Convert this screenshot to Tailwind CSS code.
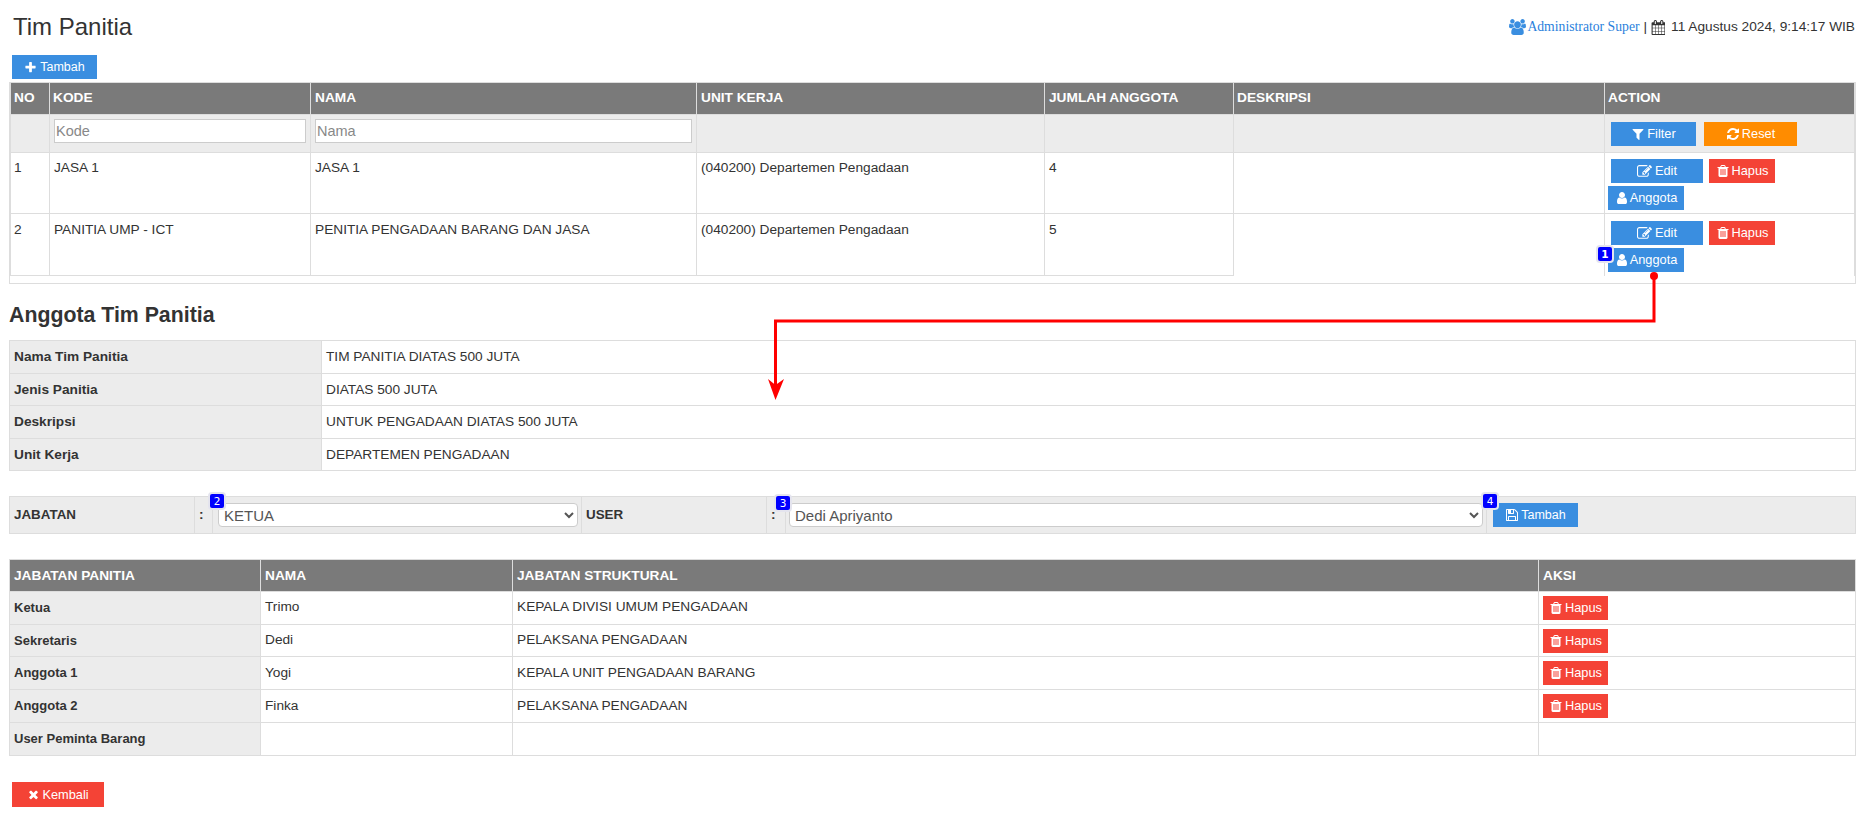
<!DOCTYPE html>
<html lang="en">
  <head>
    <meta charset="UTF-8" />
    <meta name="viewport" content="width=device-width, initial-scale=1.0" />
    <script src="https://cdn.jsdelivr.net/npm/@tailwindcss/browser@4"></script>
    <title>Tim Panitia</title>
  </head>
  <body class="bg-white">
    <svg class="hidden">
      <symbol id="i-plus" viewBox="0 0 1792 1792"><path d="M1600 736v192q0 40-28 68t-68 28h-416v416q0 40-28 68t-68 28h-192q-40 0-68-28t-28-68v-416h-416q-40 0-68-28t-28-68v-192q0-40 28-68t68-28h416v-416q0-40 28-68t68-28h192q40 0 68 28t28 68v416h416q40 0 68 28t28 68z"/></symbol>
      <symbol id="i-user" viewBox="0 0 1792 1792"><path d="M1536 1399q0 109-62.5 187t-150.5 78h-854q-88 0-150.5-78t-62.5-187q0-85 8.5-160.5t31.5-152 58.5-131 94-89 134.5-34.5q131 128 313 128t313-128q76 0 134.5 34.5t94 89 58.5 131 31.5 152 8.5 160.5zm-256-887q0 159-112.5 271.5t-271.5 112.5-271.5-112.5-112.5-271.5 112.5-271.5 271.5-112.5 271.5 112.5 112.5 271.5z"/></symbol>
      <symbol id="i-trash" viewBox="0 0 1792 1792"><path d="M704 1376v-704q0-14-9-23t-23-9h-64q-14 0-23 9t-9 23v704q0 14 9 23t23 9h64q14 0 23-9t9-23zm256 0v-704q0-14-9-23t-23-9h-64q-14 0-23 9t-9 23v704q0 14 9 23t23 9h64q14 0 23-9t9-23zm256 0v-704q0-14-9-23t-23-9h-64q-14 0-23 9t-9 23v704q0 14 9 23t23 9h64q14 0 23-9t9-23zm-544-992h448l-48-117q-7-9-17-11h-317q-10 2-17 11zm928 32v64q0 14-9 23t-23 9h-96v948q0 83-47 143.5t-113 60.5h-832q-66 0-113-58.5t-47-141.5v-952h-96q-14 0-23-9t-9-23v-64q0-14 9-23t23-9h309l70-167q15-37 54-63t79-26h320q40 0 79 26t54 63l70 167h309q14 0 23 9t9 23z"/></symbol>
      <symbol id="i-filter" viewBox="0 0 1792 1792"><path d="M1595 295q17 41-14 70l-493 493v742q0 42-39 59-13 5-25 5-27 0-45-19l-256-256q-19-19-19-45v-486l-493-493q-31-29-14-70 17-39 59-39h1280q42 0 59 39z"/></symbol>
      <symbol id="i-refresh" viewBox="0 0 1792 1792"><path d="M1639 1056q0 5-1 7-64 268-268 434.5t-478 166.5q-146 0-282.5-55t-243.5-157l-129 129q-19 19-45 19t-45-19-19-45v-448q0-26 19-45t45-19h448q26 0 45 19t19 45-19 45l-137 137q71 66 161 102t187 36q134 0 250-65t186-179q11-17 53-117 8-23 30-23h192q13 0 22.5 9.5t9.5 22.5zm25-800v448q0 26-19 45t-45 19h-448q-26 0-45-19t-19-45 19-45l138-138q-148-137-349-137-134 0-250 65t-186 179q-11 17-53 117-8 23-30 23h-199q-13 0-22.5-9.5t-9.5-22.5v-7q65-268 270-434.5t480-166.5q146 0 284 55.5t245 156.5l130-129q19-19 45-19t45 19 19 45z"/></symbol>
      <symbol id="i-edit" viewBox="0 0 1792 1792"><path d="M888 1184l116-116-152-152-116 116v56h96v96h56zm440-720q-16-16-33 1l-350 350q-17 17-1 33t33-1l350-350q17-17 1-33zm80 594v190q0 119-84.5 203.5t-203.5 84.5h-832q-119 0-203.5-84.5t-84.5-203.5v-832q0-119 84.5-203.5t203.5-84.5h832q63 0 117 25 15 7 18 23 3 17-9 29l-49 49q-14 14-32 8-23-6-45-6h-832q-66 0-113 47t-47 113v832q0 66 47 113t113 47h832q66 0 113-47t47-113v-126q0-13 9-22l64-64q15-15 35-7t20 29zm-96-738l288 288-672 672h-288v-288zm444 132l-92 92-288-288 92-92q28-28 68-28t68 28l152 152q28 28 28 68t-28 68z"/></symbol>
      <symbol id="i-save" viewBox="0 0 1792 1792"><path d="M512 1536h768v-384h-768v384zm896 0h128v-896q0-14-10-38.5t-20-34.5l-281-281q-10-10-34-20t-39-10v416q0 40-28 68t-68 28h-576q-40 0-68-28t-28-68v-416h-128v1280h128v-416q0-40 28-68t68-28h832q40 0 68 28t28 68v416zm-384-928v-320q0-13-9.5-22.5t-22.5-9.5h-192q-13 0-22.5 9.5t-9.5 22.5v320q0 13 9.5 22.5t22.5 9.5h192q13 0 22.5-9.5t9.5-22.5zm640 32v928q0 40-28 68t-68 28h-1344q-40 0-68-28t-28-68v-1344q0-40 28-68t68-28h928q40 0 88 20t76 48l280 280q28 28 48 76t20 88z"/></symbol>
      <symbol id="i-times" viewBox="0 0 1792 1792"><path d="M1490 1322q0 40-28 68l-136 136q-28 28-68 28t-68-28l-294-294-294 294q-28 28-68 28t-68-28l-136-136q-28-28-28-68t28-68l294-294-294-294q-28-28-28-68t28-68l136-136q28-28 68-28t68 28l294 294 294-294q28-28 68-28t68 28l136 136q28 28 28 68t-28 68l-294 294 294 294q28 28 28 68z"/></symbol>
      <symbol id="i-users" viewBox="0 0 1920 1792"><path d="M593 896q-162 5-265 128h-134q-82 0-138-40.5t-56-118.5q0-353 124-353 6 0 43.5 21t97.5 42.5 119 21.5q67 0 133-23-5 37-5 66 0 139 81 256zm1071 637q0 120-73 189.5t-194 69.5h-874q-121 0-194-69.5t-73-189.5q0-53 3.5-103.5t14-109 26.5-108.5 43-97.5 62-81 85.5-53.5 111.5-20q10 0 43 21.5t73 48 107 48 135 21.5 135-21.5 107-48 73-48 43-21.5q61 0 111.5 20t85.5 53.5 62 81 43 97.5 26.5 108.5 14 109 3.5 103.5zm-1024-1277q0 106-75 181t-181 75-181-75-75-181 75-181 181-75 181 75 75 181zm704 384q0 159-112.5 271.5t-271.5 112.5-271.5-112.5-112.5-271.5 112.5-271.5 271.5-112.5 271.5 112.5 112.5 271.5zm576 225q0 78-56 118.5t-138 40.5h-134q-103-123-265-128 81-117 81-256 0-29-5-66 66 23 133 23 59 0 119-21.5t97.5-42.5 43.5-21q124 0 124 353zm-128-609q0 106-75 181t-181 75-181-75-75-181 75-181 181-75 181 75 75 181z"/></symbol>
      <symbol id="i-calendar" viewBox="0 0 1664 1792"><path d="M192 1664h288v-288h-288v288zm352 0h320v-288h-320v288zm-352-352h288v-320h-288v320zm352 0h320v-320h-320v320zm-352-384h288v-288h-288v288zm736 736h320v-288h-320v288zm-384-736h320v-288h-320v288zm768 736h288v-288h-288v288zm-384-352h320v-320h-320v320zm-352-864v-288q0-13-9.5-22.5t-22.5-9.5h-64q-13 0-22.5 9.5t-9.5 22.5v288q0 13 9.5 22.5t22.5 9.5h64q13 0 22.5-9.5t9.5-22.5zm736 864h288v-320h-288v320zm-384-384h320v-288h-320v288zm384 0h288v-288h-288v288zm32-480v-288q0-13-9.5-22.5t-22.5-9.5h-64q-13 0-22.5 9.5t-9.5 22.5v288q0 13 9.5 22.5t22.5 9.5h64q13 0 22.5-9.5t9.5-22.5zm384-64v1280q0 52-38 90t-90 38h-1408q-52 0-90-38t-38-90v-1280q0-52 38-90t90-38h128v-96q0-66 47-113t113-47h64q66 0 113 47t47 113v96h384v-96q0-66 47-113t113-47h64q66 0 113 47t47 113v96h128q52 0 90 38t38 90z"/></symbol>
    </svg>

    <div class="relative h-[814px] overflow-hidden pl-[9px] font-['Liberation_Sans',sans-serif] text-[13.7px] leading-[18px] text-[#333]">

      <!-- page header -->
      <div class="flex h-[55px] items-start justify-between pr-[9px]">
        <h1 class="ml-[4px] mt-[12px] text-[24px] leading-[30px]">Tim Panitia</h1>
        <div class="mt-[18px] flex items-center">
          <svg class="mr-[1px] h-[16px] w-[17px] fill-[#3a8ee0]"><use href="#i-users"/></svg>
          <span class="font-['Liberation_Serif',serif] text-[#2a7fdc]">Administrator Super</span>
          <span class="mx-[4px]">|</span>
          <svg class="mr-[6px] h-[15px] w-[14px] fill-[#333]"><use href="#i-calendar"/></svg>
          <span>11 Agustus 2024, 9:14:17 WIB</span>
        </div>
      </div>

      <button class="ml-[3px] flex h-[24px] w-[85px] items-center justify-center gap-[3px] bg-[#3a8ee0] text-[12.5px] text-white">
        <svg class="h-[13px] w-[13px] fill-white"><use href="#i-plus"/></svg>Tambah
      </button>

      <!-- tim panitia -->
      <div class="mt-[3px] w-[1847px] border-x border-b border-[#ddd] pb-[7px]">
        <table class="w-full table-fixed border-collapse">
          <thead>
            <tr class="h-[32px] bg-[#7a7a7a] text-left font-bold text-white">
              <th class="w-[39px] border border-[#ddd] px-[3px] pb-[2px]">NO</th>
              <th class="w-[261px] border border-[#ddd] px-[3px] pb-[2px]">KODE</th>
              <th class="w-[386px] border border-[#ddd] px-[4px] pb-[2px]">NAMA</th>
              <th class="w-[348px] border border-[#ddd] px-[4px] pb-[2px]">UNIT KERJA</th>
              <th class="w-[189px] border border-[#ddd] px-[4px] pb-[2px]">JUMLAH ANGGOTA</th>
              <th class="w-[371px] border border-[#ddd] px-[3px] pb-[2px]">DESKRIPSI</th>
              <th class="border border-[#ddd] px-[3px] pb-[2px]">ACTION</th>
            </tr>
          </thead>
          <tbody>
            <tr class="h-[38px] bg-[#ececec]">
              <td class="border border-[#ddd]"></td>
              <td class="border border-[#ddd] px-[4px] pb-[6px]"><input placeholder="Kode" class="h-[24px] w-[252px] border border-[#ccc] bg-white px-[1px] text-[14.5px] placeholder:text-[#888]" /></td>
              <td class="border border-[#ddd] px-[4px] pb-[6px]"><input placeholder="Nama" class="h-[24px] w-[377px] border border-[#ccc] bg-white px-[1px] text-[14.5px] placeholder:text-[#888]" /></td>
              <td class="border border-[#ddd]"></td>
              <td class="border border-[#ddd]"></td>
              <td class="border border-[#ddd]"></td>
              <td class="border border-[#ddd] pl-[6px] text-[12.8px]">
                <div class="flex gap-[8px]">
                  <button class="flex h-[24px] w-[85px] items-center justify-center gap-[2px] bg-[#3a8ee0] text-white"><svg class="h-[14px] w-[14px] fill-white"><use href="#i-filter"/></svg>Filter</button>
                  <button class="flex h-[24px] w-[93px] items-center justify-center gap-[2px] bg-[#ff8c00] text-white"><svg class="h-[14px] w-[14px] fill-white"><use href="#i-refresh"/></svg>Reset</button>
                </div>
              </td>
            </tr>
            <tr class="h-[61px] align-top">
              <td class="border border-[#ddd] px-[3px] pt-[6px]">1</td>
              <td class="border border-[#ddd] px-[4px] pt-[6px]">JASA 1</td>
              <td class="border border-[#ddd] px-[4px] pt-[6px]">JASA 1</td>
              <td class="border border-[#ddd] px-[4px] pt-[6px]">(040200) Departemen Pengadaan</td>
              <td class="border border-[#ddd] px-[4px] pt-[6px]">4</td>
              <td class="border border-[#ddd]"></td>
              <td class="border border-[#ddd] pl-[3px] pt-[6px] text-[12.8px]">
                <div class="flex gap-[6px] pl-[3px]">
                  <button class="flex h-[24px] w-[92px] items-center justify-center gap-[3px] bg-[#3a8ee0] text-white"><svg class="h-[15px] w-[15px] fill-white"><use href="#i-edit"/></svg>Edit</button>
                  <button class="flex h-[24px] w-[66px] items-center justify-center gap-[2px] bg-[#f44336] text-white"><svg class="h-[14px] w-[14px] fill-white"><use href="#i-trash"/></svg>Hapus</button>
                </div>
                <button class="mt-[3px] flex h-[24px] w-[76px] items-center justify-center gap-[1px] bg-[#3a8ee0] text-white"><svg class="h-[14px] w-[14px] fill-white"><use href="#i-user"/></svg>Anggota</button>
              </td>
            </tr>
            <tr class="h-[62px] align-top">
              <td class="border border-[#ddd] px-[3px] pt-[7px]">2</td>
              <td class="border border-[#ddd] px-[4px] pt-[7px]">PANITIA UMP - ICT</td>
              <td class="border border-[#ddd] px-[4px] pt-[7px]">PENITIA PENGADAAN BARANG DAN JASA</td>
              <td class="border border-[#ddd] px-[4px] pt-[7px]">(040200) Departemen Pengadaan</td>
              <td class="border border-[#ddd] px-[4px] pt-[7px]">5</td>
              <td class="border-x border-t border-[#ddd]"></td>
              <td class="border-x border-t border-[#ddd] pl-[3px] pt-[7px] text-[12.8px]">
                <div class="flex gap-[6px] pl-[3px]">
                  <button class="flex h-[24px] w-[92px] items-center justify-center gap-[3px] bg-[#3a8ee0] text-white"><svg class="h-[15px] w-[15px] fill-white"><use href="#i-edit"/></svg>Edit</button>
                  <button class="flex h-[24px] w-[66px] items-center justify-center gap-[2px] bg-[#f44336] text-white"><svg class="h-[14px] w-[14px] fill-white"><use href="#i-trash"/></svg>Hapus</button>
                </div>
                <div class="relative mt-[3px] w-[76px]">
                  <button class="flex h-[24px] w-[76px] items-center justify-center gap-[1px] bg-[#3a8ee0] text-white"><svg class="h-[14px] w-[14px] fill-white"><use href="#i-user"/></svg>Anggota</button>
                  <span class="absolute left-[-12px] top-[-3px] flex h-[18px] w-[18px] items-center justify-center rounded-[4px] border-2 border-[#e4e4ee] bg-[#0000ff] font-['DejaVu_Sans',sans-serif] text-[10.5px] font-bold text-white">1</span>
                </div>
              </td>
            </tr>
          </tbody>
        </table>
      </div>

      <!-- anggota -->
      <h2 class="mt-[19px] text-[21.3px] font-bold leading-[24px]">Anggota Tim Panitia</h2>

      <table class="mt-[13px] w-[1847px] table-fixed border-collapse">
        <tbody>
          <tr class="h-[33px]"><td class="w-[312px] border border-[#ddd] bg-[#ececec] px-[4px] font-bold">Nama Tim Panitia</td><td class="border border-[#ddd] px-[4px]">TIM PANITIA DIATAS 500 JUTA</td></tr>
          <tr class="h-[32px]"><td class="border border-[#ddd] bg-[#ececec] px-[4px] font-bold">Jenis Panitia</td><td class="border border-[#ddd] px-[4px]">DIATAS 500 JUTA</td></tr>
          <tr class="h-[33px]"><td class="border border-[#ddd] bg-[#ececec] px-[4px] font-bold">Deskripsi</td><td class="border border-[#ddd] px-[4px]">UNTUK PENGADAAN DIATAS 500 JUTA</td></tr>
          <tr class="h-[32px]"><td class="border border-[#ddd] bg-[#ececec] px-[4px] font-bold">Unit Kerja</td><td class="border border-[#ddd] px-[4px]">DEPARTEMEN PENGADAAN</td></tr>
        </tbody>
      </table>

      <!-- form tambah anggota -->
      <table class="mt-[25px] w-[1847px] table-fixed border-collapse bg-[#ececec]">
        <tbody>
          <tr class="h-[37px]">
            <td class="w-[185px] border border-[#ddd] px-[4px] text-[13.4px] font-bold">JABATAN</td>
            <td class="w-[18px] border border-[#ddd] px-[4px] font-bold">:</td>
            <td class="relative w-[369px] border border-[#ddd] pl-[5px]">
              <select class="h-[24px] w-[360px] rounded-[4px] border border-[#ccc] bg-white px-[1px] text-[15px] text-[#555]"><option>KETUA</option></select>
              <span class="absolute left-[-5px] top-[-5px] flex h-[18px] w-[18px] items-center justify-center rounded-[4px] border-2 border-[#e4e4ee] bg-[#0000ff] font-['DejaVu_Sans',sans-serif] text-[10.5px] text-white">2</span>
            </td>
            <td class="w-[185px] border border-[#ddd] px-[4px] text-[13.4px] font-bold">USER</td>
            <td class="w-[19px] border border-[#ddd] px-[4px] font-bold">:</td>
            <td class="relative w-[701px] border border-[#ddd] pl-[3px]">
              <select class="h-[24px] w-[694px] rounded-[4px] border border-[#ccc] bg-white px-[1px] text-[15px] text-[#555]"><option>Dedi Apriyanto</option></select>
              <span class="absolute left-[-12px] top-[-3px] flex h-[18px] w-[18px] items-center justify-center rounded-[4px] border-2 border-[#e4e4ee] bg-[#0000ff] font-['DejaVu_Sans',sans-serif] text-[10.5px] text-white">3</span>
            </td>
            <td class="relative border border-[#ddd] pl-[6px]">
              <button class="flex h-[24px] w-[85px] items-center justify-center gap-[2px] bg-[#3a8ee0] text-[12.5px] text-white"><svg class="h-[14px] w-[14px] fill-white"><use href="#i-save"/></svg>Tambah</button>
              <span class="absolute left-[-6px] top-[-5px] flex h-[18px] w-[18px] items-center justify-center rounded-[4px] border-2 border-[#e4e4ee] bg-[#0000ff] font-['DejaVu_Sans',sans-serif] text-[10.5px] text-white">4</span>
            </td>
          </tr>
        </tbody>
      </table>

      <!-- daftar anggota -->
      <table class="mt-[25px] w-[1847px] table-fixed border-collapse">
        <thead>
          <tr class="h-[32px] bg-[#7a7a7a] text-left font-bold text-white">
            <th class="w-[251px] border border-[#ddd] px-[4px]">JABATAN PANITIA</th>
            <th class="w-[252px] border border-[#ddd] px-[4px]">NAMA</th>
            <th class="w-[1026px] border border-[#ddd] px-[4px]">JABATAN STRUKTURAL</th>
            <th class="border border-[#ddd] px-[4px]">AKSI</th>
          </tr>
        </thead>
        <tbody>
          <tr class="h-[33px]">
            <td class="border border-[#ddd] bg-[#ececec] px-[4px] text-[13px] font-bold">Ketua</td>
            <td class="border border-[#ddd] px-[4px] pb-[2px]">Trimo</td>
            <td class="border border-[#ddd] px-[4px] pb-[2px]">KEPALA DIVISI UMUM PENGADAAN</td>
            <td class="border border-[#ddd] px-[4px] text-[12.8px]"><button class="flex h-[24px] w-[65px] items-center justify-center gap-[2px] bg-[#f44336] text-white"><svg class="h-[14px] w-[14px] fill-white"><use href="#i-trash"/></svg>Hapus</button></td>
          </tr>
          <tr class="h-[32px]">
            <td class="border border-[#ddd] bg-[#ececec] px-[4px] text-[13px] font-bold">Sekretaris</td>
            <td class="border border-[#ddd] px-[4px] pb-[2px]">Dedi</td>
            <td class="border border-[#ddd] px-[4px] pb-[2px]">PELAKSANA PENGADAAN</td>
            <td class="border border-[#ddd] px-[4px] text-[12.8px]"><button class="flex h-[24px] w-[65px] items-center justify-center gap-[2px] bg-[#f44336] text-white"><svg class="h-[14px] w-[14px] fill-white"><use href="#i-trash"/></svg>Hapus</button></td>
          </tr>
          <tr class="h-[33px]">
            <td class="border border-[#ddd] bg-[#ececec] px-[4px] text-[13px] font-bold">Anggota 1</td>
            <td class="border border-[#ddd] px-[4px]">Yogi</td>
            <td class="border border-[#ddd] px-[4px]">KEPALA UNIT PENGADAAN BARANG</td>
            <td class="border border-[#ddd] px-[4px] text-[12.8px]"><button class="flex h-[24px] w-[65px] items-center justify-center gap-[2px] bg-[#f44336] text-white"><svg class="h-[14px] w-[14px] fill-white"><use href="#i-trash"/></svg>Hapus</button></td>
          </tr>
          <tr class="h-[33px]">
            <td class="border border-[#ddd] bg-[#ececec] px-[4px] text-[13px] font-bold">Anggota 2</td>
            <td class="border border-[#ddd] px-[4px]">Finka</td>
            <td class="border border-[#ddd] px-[4px]">PELAKSANA PENGADAAN</td>
            <td class="border border-[#ddd] px-[4px] text-[12.8px]"><button class="flex h-[24px] w-[65px] items-center justify-center gap-[2px] bg-[#f44336] text-white"><svg class="h-[14px] w-[14px] fill-white"><use href="#i-trash"/></svg>Hapus</button></td>
          </tr>
          <tr class="h-[33px]">
            <td class="border border-[#ddd] bg-[#ececec] px-[4px] text-[13px] font-bold">User Peminta Barang</td>
            <td class="border border-[#ddd]"></td>
            <td class="border border-[#ddd]"></td>
            <td class="border border-[#ddd]"></td>
          </tr>
        </tbody>
      </table>

      <button class="ml-[3px] mt-[26px] flex h-[25px] w-[92px] items-center justify-center gap-[2px] bg-[#f44336] text-[12.8px] text-white">
        <svg class="h-[13px] w-[13px] fill-white"><use href="#i-times"/></svg>Kembali
      </button>

      <!-- annotation arrow -->
      <svg class="pointer-events-none absolute left-0 top-0 h-[814px] w-[1864px]" viewBox="0 0 1864 814">
        <circle cx="1654" cy="276" r="4" fill="#ff0000" />
        <path d="M1654 276V321H775.500V388" fill="none" stroke="#ff0000" stroke-width="3" />
        <polygon points="775.500,400 768,379 775.500,385 784,379" fill="#ff0000" />
      </svg>
    </div>
  </body>
</html>
